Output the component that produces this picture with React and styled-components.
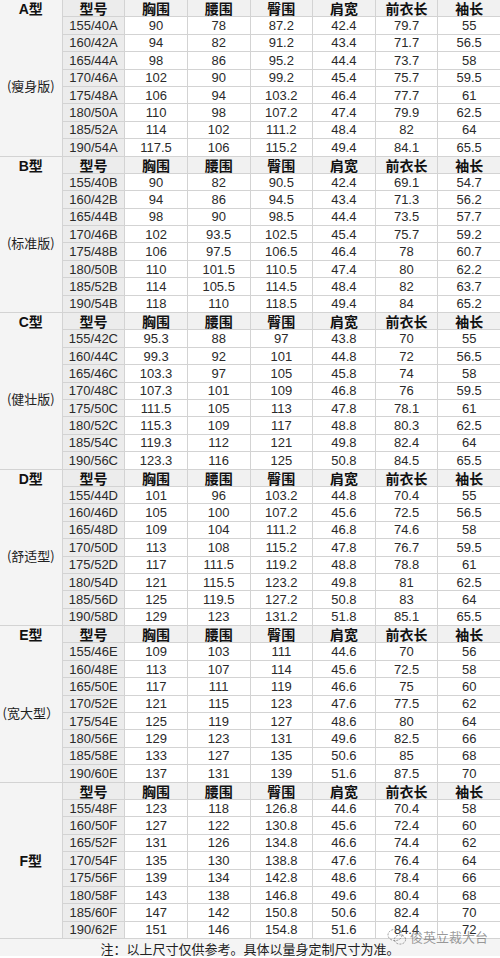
import React from 'react';
import styled, { createGlobalStyle } from 'styled-components';

const GlobalStyle = createGlobalStyle`
  html, body { margin: 0; padding: 0; background: #fff; }
  body { font-family: "Liberation Sans", "Noto Sans CJK SC", sans-serif; }
`;

const heads = ['型号', '胸围', '腰围', '臀围', '肩宽', '前衣长', '袖长'];

const groups = [
  { type: 'A型', note: '(瘦身版)', rows: [
    ['155/40A', '90', '78', '87.2', '42.4', '79.7', '55'],
    ['160/42A', '94', '82', '91.2', '43.4', '71.7', '56.5'],
    ['165/44A', '98', '86', '95.2', '44.4', '73.7', '58'],
    ['170/46A', '102', '90', '99.2', '45.4', '75.7', '59.5'],
    ['175/48A', '106', '94', '103.2', '46.4', '77.7', '61'],
    ['180/50A', '110', '98', '107.2', '47.4', '79.9', '62.5'],
    ['185/52A', '114', '102', '111.2', '48.4', '82', '64'],
    ['190/54A', '117.5', '106', '115.2', '49.4', '84.1', '65.5'],
  ]},
  { type: 'B型', note: '(标准版)', rows: [
    ['155/40B', '90', '82', '90.5', '42.4', '69.1', '54.7'],
    ['160/42B', '94', '86', '94.5', '43.4', '71.3', '56.2'],
    ['165/44B', '98', '90', '98.5', '44.4', '73.5', '57.7'],
    ['170/46B', '102', '93.5', '102.5', '45.4', '75.7', '59.2'],
    ['175/48B', '106', '97.5', '106.5', '46.4', '78', '60.7'],
    ['180/50B', '110', '101.5', '110.5', '47.4', '80', '62.2'],
    ['185/52B', '114', '105.5', '114.5', '48.4', '82', '63.7'],
    ['190/54B', '118', '110', '118.5', '49.4', '84', '65.2'],
  ]},
  { type: 'C型', note: '(健壮版)', rows: [
    ['155/42C', '95.3', '88', '97', '43.8', '70', '55'],
    ['160/44C', '99.3', '92', '101', '44.8', '72', '56.5'],
    ['165/46C', '103.3', '97', '105', '45.8', '74', '58'],
    ['170/48C', '107.3', '101', '109', '46.8', '76', '59.5'],
    ['175/50C', '111.5', '105', '113', '47.8', '78.1', '61'],
    ['180/52C', '115.3', '109', '117', '48.8', '80.3', '62.5'],
    ['185/54C', '119.3', '112', '121', '49.8', '82.4', '64'],
    ['190/56C', '123.3', '116', '125', '50.8', '84.5', '65.5'],
  ]},
  { type: 'D型', note: '(舒适型)', rows: [
    ['155/44D', '101', '96', '103.2', '44.8', '70.4', '55'],
    ['160/46D', '105', '100', '107.2', '45.6', '72.5', '56.5'],
    ['165/48D', '109', '104', '111.2', '46.8', '74.6', '58'],
    ['170/50D', '113', '108', '115.2', '47.8', '76.7', '59.5'],
    ['175/52D', '117', '111.5', '119.2', '48.8', '78.8', '61'],
    ['180/54D', '121', '115.5', '123.2', '49.8', '81', '62.5'],
    ['185/56D', '125', '119.5', '127.2', '50.8', '83', '64'],
    ['190/58D', '129', '123', '131.2', '51.8', '85.1', '65.5'],
  ]},
  { type: 'E型', note: '(宽大型）', rows: [
    ['155/46E', '109', '103', '111', '44.6', '70', '56'],
    ['160/48E', '113', '107', '114', '45.6', '72.5', '58'],
    ['165/50E', '117', '111', '119', '46.6', '75', '60'],
    ['170/52E', '121', '115', '123', '47.6', '77.5', '62'],
    ['175/54E', '125', '119', '127', '48.6', '80', '64'],
    ['180/56E', '129', '123', '131', '49.6', '82.5', '66'],
    ['185/58E', '133', '127', '135', '50.6', '85', '68'],
    ['190/60E', '137', '131', '139', '51.6', '87.5', '70'],
  ]},
  { type: 'F型', note: null, rows: [
    ['155/48F', '123', '118', '126.8', '44.6', '70.4', '58'],
    ['160/50F', '127', '122', '130.8', '45.6', '72.4', '60'],
    ['165/52F', '131', '126', '134.8', '46.6', '74.4', '62'],
    ['170/54F', '135', '130', '138.8', '47.6', '76.4', '64'],
    ['175/56F', '139', '134', '142.8', '48.6', '78.4', '66'],
    ['180/58F', '143', '138', '146.8', '49.6', '80.4', '68'],
    ['185/60F', '147', '142', '150.8', '50.6', '82.4', '70'],
    ['190/62F', '151', '146', '154.8', '51.6', '84.4', '72'],
  ]},
];

const Sheet = styled.div`
  position: relative;
  width: 500px;
  display: grid;
  grid-template-columns: repeat(8, 1fr);
  grid-auto-rows: 16.4px;
  gap: 1px;
  background: #d3d3d3;
  padding-bottom: 1px;
`;

const Cell = styled.div`
  display: flex;
  align-items: center;
  justify-content: center;
  background: ${p => (p.$tone === 'model' ? '#ececec' : p.$tone === 'head' ? '#f1f1f1' : '#fff')};
  color: ${p => (p.$head ? '#111' : '#2a2a2a')};
  font-family: ${p => (p.$head
    ? '"Noto Sans CJK SC", "Liberation Sans", sans-serif'
    : '"Liberation Sans", "Noto Sans CJK SC", sans-serif')};
  font-size: ${p => (p.$head ? '14px' : '13px')};
  font-weight: ${p => (p.$head ? 700 : 400)};
  line-height: 1;
  white-space: nowrap;
`;

const TypeCell = styled.div`
  grid-row: span 9;
  background: #f4f4f4;
  display: flex;
  flex-direction: column;
  justify-content: ${p => (p.$center ? 'center' : 'flex-start')};
  align-items: center;
  color: #222;
  font-family: "Noto Sans CJK SC", "Liberation Sans", sans-serif;
`;

const TypeName = styled.div`
  height: 16.4px;
  display: flex;
  align-items: center;
  font-family: "Liberation Sans", "Noto Sans CJK SC", sans-serif;
  font-size: 14px;
  font-weight: 700;
  color: #111;
`;

const TypeNote = styled.div`
  flex: 1;
  display: flex;
  align-items: center;
  font-size: 13px;
`;

const Footer = styled.div`
  grid-column: 1 / -1;
  height: 18px;
  background: #f4f4f4;
  display: flex;
  align-items: center;
  justify-content: center;
  font-family: "Noto Sans CJK SC", sans-serif;
  font-size: 13px;
  color: #222;
`;

const Mark = styled.div`
  position: absolute;
  right: 12px;
  bottom: 10px;
  display: flex;
  align-items: center;
  gap: 3px;
  color: rgba(120, 120, 120, 0.75);
  font-family: "Noto Sans CJK SC", sans-serif;
  font-size: 13px;
  pointer-events: none;
`;

function WeChatMark() {
  return (
    <svg width="20" height="18" viewBox="0 0 20 18" fill="none" stroke="rgba(130,130,130,0.8)" strokeWidth="1" strokeDasharray="2 1.2">
      <ellipse cx="8" cy="7" rx="7" ry="5.6" />
      <ellipse cx="13" cy="11.5" rx="5.6" ry="4.6" />
    </svg>
  );
}

function Group({ group }) {
  return (
    <>
      <TypeCell $center={!group.note}>
        {group.note ? (
          <>
            <TypeName>{group.type}</TypeName>
            <TypeNote>{group.note}</TypeNote>
          </>
        ) : (
          <TypeName>{group.type}</TypeName>
        )}
      </TypeCell>
      {heads.map((h, i) => (
        <Cell key={h} $head $tone={i === 0 ? 'model' : 'head'}>{h}</Cell>
      ))}
      {group.rows.map(row =>
        row.map((v, i) => (
          <Cell key={row[0] + i} $tone={i === 0 ? 'model' : 'data'}>{v}</Cell>
        ))
      )}
    </>
  );
}

export default function App() {
  return (
    <>
      <GlobalStyle />
      <Sheet>
        {groups.map(g => <Group key={g.type} group={g} />)}
        <Footer>注：以上尺寸仅供参考。具体以量身定制尺寸为准。</Footer>
        <Mark>
          <WeChatMark />
          <span>俊英立裁大台</span>
        </Mark>
      </Sheet>
    </>
  );
}
